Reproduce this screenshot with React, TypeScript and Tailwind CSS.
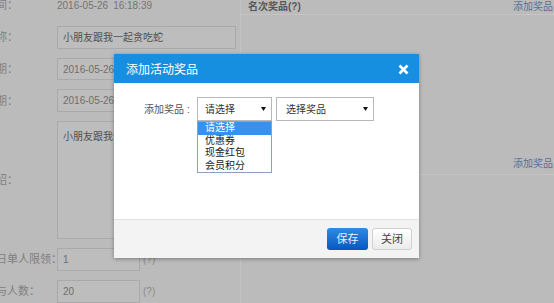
import * as React from "react";

const sans = "font-['Liberation_Sans','Noto_Sans_CJK_SC',sans-serif]";

function Row({ label, children, tall }: { label: string; children: React.ReactNode; tall?: boolean }) {
    return (
        <div className={`flex items-center ${tall ? "h-[124px]" : "h-[24px]"}`}>
            <div className="-ml-[15px] w-[72px] shrink-0 whitespace-nowrap text-[11px] text-[#808080]">{label}</div>
            {children}
        </div>
    );
}

function Caret() {
    return (
        <svg width="5" height="4" viewBox="0 0 5 4" className="shrink-0">
            <polygon points="0,0 5,0 2.5,4" fill="#111" />
        </svg>
    );
}

function PrizeDialog() {
    const options = ["请选择", "优惠券", "现金红包", "会员积分"];

    return (
        <div className="absolute left-[114px] top-[54px] w-[305px] bg-white shadow-[0_1px_4px_rgba(0,0,0,0.35)]">
            <div className="flex h-[29px] items-center justify-between bg-[#168fe0] pl-[12px] pr-[10px] pt-[2px] text-[12px] text-white">
                <span>添加活动奖品</span>
                <svg width="11" height="11" viewBox="0 0 11 11">
                    <path d="M1.5 1.5 L9.5 9.5 M9.5 1.5 L1.5 9.5" stroke="#fff" strokeWidth="2.6" />
                </svg>
            </div>

            <div className="flex h-[136px] items-start pt-[14px] text-[10px]">
                <div className="ml-[30px] mr-[3px] flex h-[24px] w-[50px] items-center whitespace-nowrap text-[#555]">
                    添加奖品<span className="ml-[3px]">:</span>
                </div>

                <div className="relative w-[75px]">
                    <div className="flex h-[24px] items-center justify-between border border-[#b8b8b8] pl-[7px] pr-[5px] text-[#333]">
                        <span>请选择</span>
                        <Caret />
                    </div>
                    {/* open native list */}
                    <div className="absolute left-0 top-full w-[75px] border border-[#8aa2bd] bg-white">
                        {options.map((o, i) => (
                            <div
                                key={o}
                                className={`pl-[7px] leading-[12.5px] ${i === 0 ? "bg-[#3592f0] text-white" : "text-[#222]"}`}
                            >
                                {o}
                            </div>
                        ))}
                    </div>
                </div>

                <div className="ml-[4px] flex h-[24px] w-[98px] items-center justify-between border border-[#b8b8b8] pl-[9px] pr-[5px] text-[#333]">
                    <span>选择奖品</span>
                    <Caret />
                </div>
            </div>

            <div className="flex h-[39px] items-center justify-end gap-[4px] border-t border-[#e2e2e2] bg-[#f3f3f3] pr-[7px] text-[11px]">
                <button className="h-[22px] w-[41px] rounded-[3px] bg-gradient-to-b from-[#2e8be3] to-[#0657c1] text-[#e8f2ff]">
                    保存
                </button>
                <button className="h-[22px] w-[40px] rounded-[3px] border border-[#d0d0d0] bg-gradient-to-b from-white to-[#ebebeb] text-[#444]">
                    关闭
                </button>
            </div>
        </div>
    );
}

export default function App() {
    return (
        <div className={`relative h-[303px] w-[554px] overflow-hidden bg-[#bbbbbb] text-[10px] ${sans}`}>
            <div className="flex h-full">
                {/* activity form */}
                <div className="-mt-[6px] flex w-[241px] shrink-0 flex-col gap-[9px] border-r border-[#c3c3c3]">
                    <Row label="时间：">
                        <span className="text-[#747474]">
                            2016-05-26<span className="ml-[5px]">16:18:39</span>
                        </span>
                    </Row>
                    <Row label="名称：">
                        <div className="flex h-full w-[179px] items-center border border-[#a9a9a9] bg-[#bdbdbd] pl-[5px] text-[#505050]">
                            小朋友跟我一起贪吃蛇
                        </div>
                    </Row>
                    <Row label="日期：">
                        <div className="flex h-full w-[179px] items-center border border-[#a9a9a9] bg-[#bdbdbd] pl-[5px] text-[#6e6e6e]">
                            2016-05-26
                        </div>
                    </Row>
                    <Row label="日期：">
                        <div className="flex h-full w-[179px] items-center border border-[#a9a9a9] bg-[#bdbdbd] pl-[5px] text-[#6e6e6e]">
                            2016-05-26
                        </div>
                    </Row>
                    <Row label="介绍：" tall>
                        <div className="h-full w-[179px] border border-[#a9a9a9] bg-[#bdbdbd] pl-[5px] pt-[7px] text-[#505050]">
                            小朋友跟我一起贪吃蛇
                        </div>
                    </Row>
                    <Row label="每日单人限领：">
                        <div className="flex h-full w-[83px] items-center border border-[#a9a9a9] bg-[#bdbdbd] pl-[5px] text-[#6e6e6e]">
                            1
                        </div>
                        <span className="ml-[3px] text-[#8a8a8a]">(?)</span>
                    </Row>
                    <Row label="参与人数：">
                        <div className="flex h-full w-[83px] items-center border border-[#a9a9a9] bg-[#bdbdbd] pl-[5px] text-[#6e6e6e]">
                            20
                        </div>
                        <span className="ml-[3px] text-[#8a8a8a]">(?)</span>
                    </Row>
                </div>

                {/* prize lists */}
                <div className="flex flex-1 flex-col">
                    <div className="-mt-[2px] flex h-[17px] items-center justify-between border-b border-[#c5c5c5] pl-[7px] pr-[1px]">
                        <span className="font-bold text-[#575757]">名次奖品(?)</span>
                        <span className="text-[#56719a]">添加奖品</span>
                    </div>
                    <div className="h-[138px]" />
                    <div className="flex h-[22px] items-center justify-between border-b border-[#c5c5c5] pl-[7px] pr-[1px]">
                        <span className="font-bold text-[#575757]">参与奖品(?)</span>
                        <span className="text-[#56719a]">添加奖品</span>
                    </div>
                </div>
            </div>

            <PrizeDialog />
        </div>
    );
}
